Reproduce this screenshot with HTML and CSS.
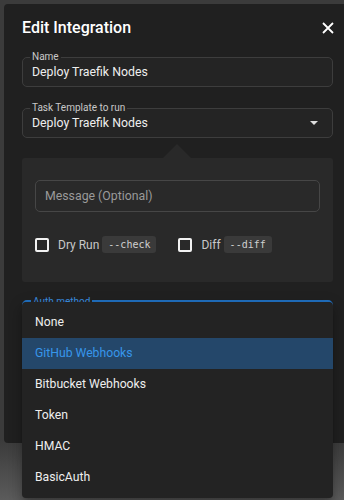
FILE: index.html
```html
<!DOCTYPE html>
<html lang="en">
<head>
    <meta charset="UTF-8">
    <meta name="viewport" content="width=device-width, initial-scale=1.0">
    <title>Edit Integration</title>
    <link rel="stylesheet" href="styles.css">
</head>
<body>
    <div class="dialog">
        <div class="dialog-head">
            <h2 class="dialog-title">Edit Integration</h2>
            <button class="close-btn" aria-label="Close">
                <svg width="12" height="12" viewBox="0 0 12 12"><path d="M1 1L11 11M11 1L1 11" stroke="#fff" stroke-width="1.8" fill="none"/></svg>
            </button>
        </div>

        <fieldset class="field">
            <legend>Name</legend>
            <div class="field-value">Deploy Traefik Nodes</div>
        </fieldset>

        <fieldset class="field field-select">
            <legend>Task Template to run</legend>
            <div class="field-value">Deploy Traefik Nodes<span class="caret"></span></div>
        </fieldset>

        <div class="task-panel">
            <div class="message-input">Message (Optional)</div>
            <div class="options">
                <label class="check"><span class="box"></span>Dry Run <code>--check</code></label>
                <label class="check"><span class="box"></span>Diff <code>--diff</code></label>
            </div>
        </div>

        <div class="auth">
            <fieldset class="field field-focus">
                <legend>Auth method</legend>
                <div class="field-value">&nbsp;</div>
            </fieldset>
            <ul class="menu">
                <li>None</li>
                <li class="active">GitHub Webhooks</li>
                <li>Bitbucket Webhooks</li>
                <li>Token</li>
                <li>HMAC</li>
                <li>BasicAuth</li>
            </ul>
        </div>
    </div>
</body>
</html>
```

FILE: styles.css
```css
html, body {
    margin: 0;
}
body {
    height: 500px;
    overflow: hidden;
    box-sizing: border-box;
    padding: 4px 0 0 4px;
    background: linear-gradient(#3b3b3b 0, #3b3b3b 440px, #5b5b5b 500px);
    font-family: Roboto, "Liberation Sans", sans-serif;
}
.dialog {
    width: 347px;
    height: 439px;
    box-sizing: border-box;
    padding: 0 18px;
    background-color: #202020;
    border-radius: 4px;
}
.dialog-head {
    display: flex;
    justify-content: space-between;
    align-items: center;
    padding-top: 12px;
}
.dialog-title {
    margin: 0;
    font-size: 16px;
    line-height: 24px;
    font-weight: 500;
    color: #fff;
}
.close-btn {
    display: flex;
    border: none;
    background: none;
    padding: 0;
    margin-right: -1px;
}
.field {
    margin: 12px 0 0;
    padding: 0 9px;
    min-width: 0;
    border: 1px solid #3d3d3d;
    border-radius: 5px;
    background-color: #242424;
}
.field legend {
    font-size: 10px;
    line-height: 10px;
    padding: 0 2px;
    margin-left: -2px;
    color: #c8c8c8;
}
.field-value {
    display: flex;
    justify-content: space-between;
    align-items: center;
    font-size: 12.3px;
    line-height: 16px;
    padding: 2px 0 6px;
    color: #eee;
}
.field-select {
    margin-top: 16px;
}
.caret {
    width: 0;
    height: 0;
    margin-right: 5px;
    border-left: 4px solid transparent;
    border-right: 4px solid transparent;
    border-top: 4px solid #ddd;
}
.task-panel {
    position: relative;
    margin-top: 20px;
    padding: 22px 13px 29px;
    background-color: #292929;
    border-radius: 3px;
}
.task-panel::before {
    content: "";
    position: absolute;
    top: -14px;
    left: 141px;
    border-left: 14px solid transparent;
    border-right: 14px solid transparent;
    border-bottom: 14px solid #292929;
}
.message-input {
    border: 1px solid #464646;
    border-radius: 5px;
    padding: 0 9px;
    line-height: 30px;
    font-size: 12.3px;
    color: #9a9a9a;
}
.options {
    display: flex;
    gap: 22px;
    margin-top: 24px;
}
.check {
    display: flex;
    align-items: center;
    font-size: 12px;
    color: #c8c8c8;
    white-space: pre;
}
.box {
    width: 10px;
    height: 10px;
    border: 2px solid #f2f2f2;
    border-radius: 2px;
    margin-right: 9px;
}
.check code {
    font-family: "DejaVu Sans Mono", "Liberation Mono", monospace;
    font-size: 10px;
    line-height: 17px;
    padding: 0 6px;
    background-color: #3a3a3a;
    border-radius: 3px;
    color: #d0d0d0;
}
.auth {
    position: relative;
    margin-top: 13px;
}
.field-focus {
    margin: 0;
    border: 2px solid #2170c0;
}
.field-focus legend {
    padding-top: 2px;
    color: #3a8ee0;
}
.menu {
    position: absolute;
    top: 7px;
    left: 0;
    right: 0;
    margin: 0;
    padding: 5px 0;
    list-style: none;
    background-color: #232323;
    border-radius: 4px;
    box-shadow: 0 5px 5px -3px rgba(0,0,0,0.2), 0 8px 10px 1px rgba(0,0,0,0.14), 0 3px 14px 2px rgba(0,0,0,0.12);
}
.menu li {
    height: 31px;
    line-height: 31px;
    padding-left: 13px;
    font-size: 12.2px;
    color: #eee;
}
.menu li.active {
    background-color: #24476a;
    color: #3796ea;
}
```
